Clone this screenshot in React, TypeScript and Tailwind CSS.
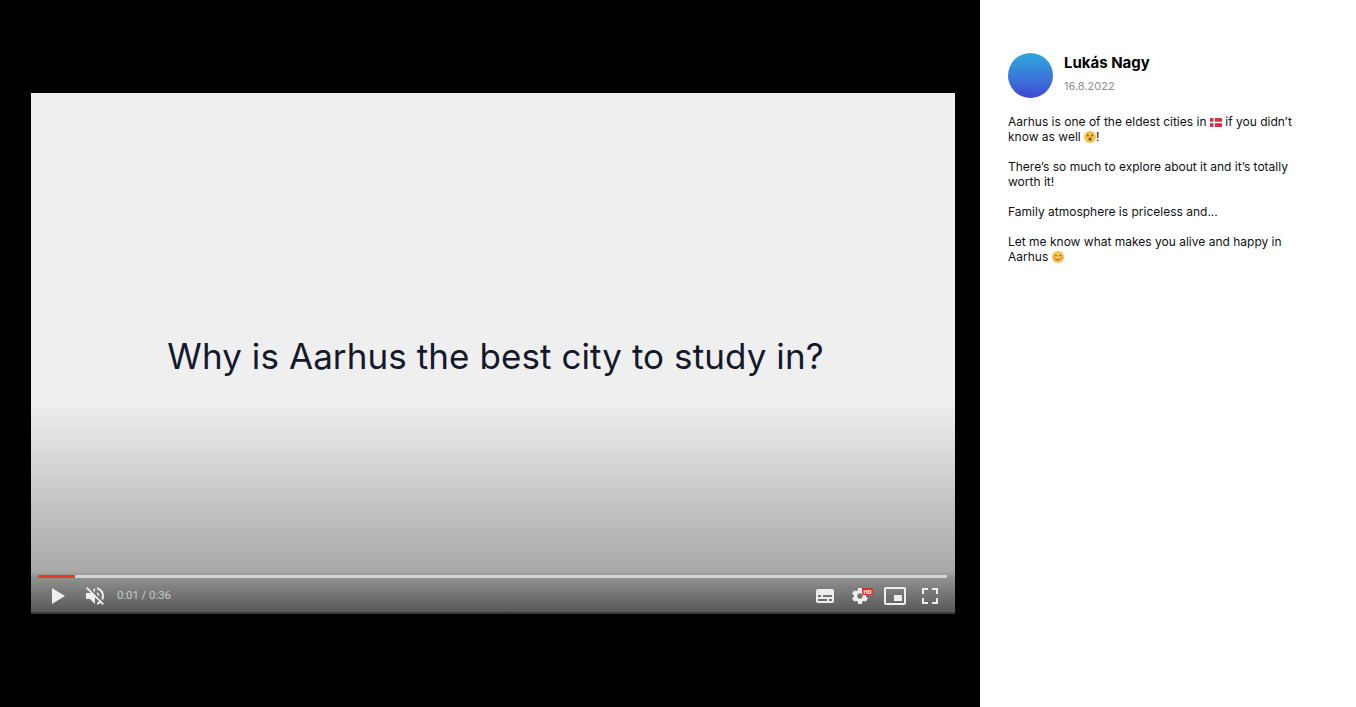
const Flag = () => (
  <svg viewBox="0 0 12 9" className="inline-block w-[12px] h-[9px] align-[-0.5px]">
    <rect width="12" height="9" rx="1" fill="#d5304a" />
    <rect x="3.4" width="1.5" height="9" fill="#f6f0f0" />
    <rect y="3.7" width="12" height="1.5" fill="#f6f0f0" />
  </svg>
);

const HushedFace = () => (
  <svg viewBox="0 0 12 12" className="inline-block w-[12px] h-[12px] align-[-2px]">
    <circle cx="6" cy="6" r="6" fill="#f7c24a" />
    <circle cx="3.8" cy="4.6" r="0.9" fill="#7a4a22" />
    <circle cx="8.2" cy="4.6" r="0.9" fill="#7a4a22" />
    <path d="M2.6 3 L4.6 2.6 M7.4 2.6 L9.4 3" stroke="#a9702c" strokeWidth="0.6" />
    <ellipse cx="6" cy="8.2" rx="1.5" ry="1.9" fill="#8a4b2c" />
    <ellipse cx="6" cy="9.2" rx="1" ry="0.8" fill="#e8795a" />
  </svg>
);

const SmilingFace = () => (
  <svg viewBox="0 0 12 12" className="inline-block w-[12px] h-[12px] align-[-2px]">
    <circle cx="6" cy="6" r="6" fill="#f7c24a" />
    <circle cx="2.6" cy="7" r="1.5" fill="#f29a5e" />
    <circle cx="9.4" cy="7" r="1.5" fill="#f29a5e" />
    <path d="M2.4 4.8 Q3.7 3.8 5 4.8 M7 4.8 Q8.3 3.8 9.6 4.8" stroke="#7a4a22" strokeWidth="0.8" fill="none" />
    <path d="M3.8 8.2 Q6 10.2 8.2 8.2" stroke="#7a4a22" strokeWidth="0.8" fill="none" />
  </svg>
);

const PlayerIcon = ({ children }: { children: React.ReactNode }) => (
  <svg viewBox="0 0 36 36" className="w-[36px] h-[36px] shrink-0" fill="#eeeeee">
    {children}
  </svg>
);

const Player = () => (
  <div className="relative w-[924px] h-[521px] bg-[#efeff0] flex items-center justify-center overflow-hidden">
    <h1 className="pl-[5px] pt-[5px] text-[#14182c] text-[35px] leading-[44px] tracking-[0.08px] font-[Inter,sans-serif] whitespace-nowrap">
      Why is Aarhus the best city to study in?
    </h1>

    {/* bottom shade */}
    <div className="absolute inset-x-0 bottom-0 h-[213px] bg-[linear-gradient(to_bottom,#efeff0_0%,#a8a8a8_80%,#909090_83%,#555555_100%)]" />
    <div className="absolute inset-x-0 bottom-0 h-[2px] bg-[#3a3a3a]" />

    <div className="absolute inset-x-0 bottom-0 h-[39px] flex flex-col px-[7px]">
      <div className="h-[3px] bg-[#d4d4d4] mr-[1px]">
        <div className="h-full w-[37px] bg-[#ea3a2e]" />
      </div>
      <div className="flex items-center h-[36px] pl-[2px]">
        <PlayerIcon>
          <path d="M12 26 18.5 22 18.5 14 12 10z M18.5 22 25 18 25 18 18.5 14z" />
        </PlayerIcon>
        <div className="ml-[2px]">
          <PlayerIcon>
            <path d="m21.48 17.98c0-1.77-1.02-3.29-2.5-4.03v2.21l2.45 2.45c.03-.2.05-.41.05-.63zm2.5 0c0 .94-.2 1.82-.54 2.64l1.51 1.51c.66-1.24 1.03-2.65 1.03-4.15 0-4.28-2.99-7.86-7-8.76v2.05c2.89.86 5 3.54 5 6.71zM9.25 8.98l-1.27 1.26 4.72 4.73H7.98v6H11.98l5 5v-6.73l4.25 4.25c-.67.52-1.42.93-2.25 1.18v2.06c1.38-.31 2.63-.95 3.69-1.81l2.04 2.05 1.27-1.27-9-9-7.72-7.72zm7.72.99-2.09 2.08 2.09 2.09V9.98z" />
          </PlayerIcon>
        </div>
        <span className="ml-[3px] text-[11.3px] text-[#cccccc] font-[Roboto,sans-serif]">0:01 / 0:36</span>
        <div className="ml-auto flex items-center -space-x-px">
          <PlayerIcon>
            <path d="M11 11C9.9 11 9 11.9 9 13L9 23C9 24.1 9.9 25 11 25L25 25C26.1 25 27 24.1 27 23L27 13C27 11.9 26.1 11 25 11L11 11ZM11 17L14 17L14 19L11 19L11 17ZM20 23L11 23L11 21L20 21L20 23ZM25 23L22 23L22 21L25 21L25 23ZM25 19L16 19L16 17L25 17L25 19Z" />
          </PlayerIcon>
          <div className="relative w-[36px] h-[36px]">
            <PlayerIcon>
              <path d="m23.94 18.78c.03-.25.05-.51.05-.78 0-.27-.02-.52-.05-.78l1.68-1.32c.15-.12.19-.33.09-.51l-1.6-2.76c-.09-.17-.31-.24-.48-.17l-1.99.8c-.41-.32-.86-.58-1.35-.78l-.3-2.12c-.02-.19-.19-.33-.39-.33l-3.2 0c-.2 0-.36.14-.39.33l-.3 2.12c-.48.2-.93.47-1.35.78l-1.99-.8c-.18-.07-.39 0-.48.17l-1.6 2.76c-.1.17-.05.39.09.51l1.68 1.32c-.03.25-.05.52-.05.78 0 .26.02.52.05.78l-1.68 1.32c-.15.12-.19.33-.09.51l1.6 2.76c.09.17.31.24.48.17l1.99-.8c.41.32.86.58 1.35.78l.3 2.12c.02.19.19.33.39.33l3.2 0c.2 0 .36-.14.39-.33l.3-2.12c.48-.2.93-.47 1.35-.78l1.99.8c.18.07.39 0 .48-.17l1.6-2.76c.09-.17.05-.39-.09-.51l-1.68-1.32zm-5.94 2.01c-1.54 0-2.8-1.25-2.8-2.8 0-1.54 1.25-2.8 2.8-2.8 1.54 0 2.8 1.25 2.8 2.8 0 1.54-1.25 2.8-2.8 2.8z" />
            </PlayerIcon>
            <span className="absolute left-[20px] top-[10px] h-[7px] w-[11px] rounded-[1px] bg-[#d8342c] text-white text-[6px] leading-[7px] font-bold text-center font-[Roboto,sans-serif]">
              HD
            </span>
          </div>
          <PlayerIcon>
            <path d="M25 17L17 17L17 23L25 23L25 17ZM29 25L29 10.98C29 9.88 28.1 9 27 9L9 9C7.9 9 7 9.88 7 10.98L7 25C7 26.1 7.9 27 9 27L27 27C28.1 27 29 26.1 29 25ZM27 25.02L9 25.02L9 10.97L27 10.97L27 25.02Z" />
          </PlayerIcon>
          <PlayerIcon>
            <path d="m10 16 2 0 0-4 4 0 0-2L10 10zM20 10l0 2 4 0 0 4 2 0L26 10zM24 24l-4 0 0 2L26 26l0-6-2 0 0 4zM12 20 10 20 10 26l6 0 0-2-4 0 0-4z" />
          </PlayerIcon>
        </div>
      </div>
    </div>
  </div>
);

const App = () => {
  return (
    <div className="flex h-[707px] w-[1356px] overflow-hidden font-[Inter,sans-serif]">
      <div className="w-[980px] bg-black flex items-center pl-[31px]">
        <Player />
      </div>

      <aside className="flex-1 bg-white pl-[28px] pr-[48px] pt-[53px]">
        <div className="flex gap-[11px]">
          <div className="w-[45px] h-[45px] rounded-full bg-gradient-to-b from-[#2fa8de] to-[#3f48d2]" />
          <div>
            <div className="text-[15px] leading-[20px] font-bold text-black">Lukás Nagy</div>
            <div className="mt-[6px] text-[11px] leading-[15px] text-[#8f8f8f]">16.8.2022</div>
          </div>
        </div>

        <div className="mt-[16px] text-[12px] leading-[15px] text-[#111] flex flex-col gap-[15px]">
          <p>
            Aarhus is one of the eldest cities in <Flag /> if you didn’t know as well <HushedFace />!
          </p>
          <p>There’s so much to explore about it and it’s totally worth it!</p>
          <p>Family atmosphere is priceless and...</p>
          <p>
            Let me know what makes you alive and happy in Aarhus <SmilingFace />
          </p>
        </div>
      </aside>
    </div>
  );
};

export default App;
